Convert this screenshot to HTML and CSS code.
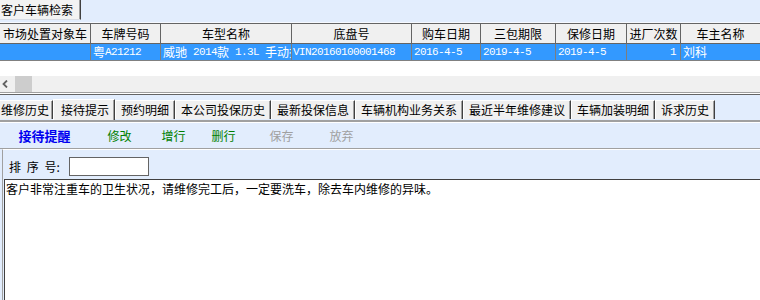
FILE: index.html
```html
<!DOCTYPE html>
<html>
<head>
<meta charset="utf-8">
<link rel="stylesheet" href="styles.css">
</head>
<body>
<div class="page">
  <div class="top-tabs"><div class="top-tab">客户车辆检索</div></div>
  <div class="grid">
    <div class="row head">
      <div class="c w1">市场处置对象车</div>
      <div class="c w2">车牌号码</div>
      <div class="c w3">车型名称</div>
      <div class="c w4">底盘号</div>
      <div class="c w5">购车日期</div>
      <div class="c w6">三包期限</div>
      <div class="c w7">保修日期</div>
      <div class="c w8">进厂次数</div>
      <div class="c w9">车主名称</div>
    </div>
    <div class="row sel">
      <div class="c w1"></div>
      <div class="c w2">粤<span class="m">A21212</span></div>
      <div class="c w3">威驰<span class="m"> 2014</span>款<span class="m"> 1.3L </span>手动挡</div>
      <div class="c w4 m">VIN20160100001468</div>
      <div class="c w5 m">2016-4-5</div>
      <div class="c w6 m">2019-4-5</div>
      <div class="c w7 m">2019-4-5</div>
      <div class="c w8 m num">1</div>
      <div class="c w9">刘科</div>
    </div>
    <div class="grid-empty"></div>
    <div class="hscroll">
      <span class="arrow"><svg width="7" height="8" viewBox="0 0 7 8"><path d="M5 0.5 L1.5 4 L5 7.5" fill="none" stroke="#606060" stroke-width="1.8"/></svg></span>
      <span class="thumb"></span>
    </div>
  </div>
  <div class="sep"></div>
  <div class="tabs">
    <div class="tab first">维修历史</div>
    <div class="tab active">接待提示</div>
    <div class="tab">预约明细</div>
    <div class="tab">本公司投保历史</div>
    <div class="tab">最新投保信息</div>
    <div class="tab">车辆机构业务关系</div>
    <div class="tab">最近半年维修建议</div>
    <div class="tab">车辆加装明细</div>
    <div class="tab">诉求历史</div>
  </div>
  <div class="toolbar">
    <div class="btn b1 primary">接待提醒</div>
    <div class="btn b2 green">修改</div>
    <div class="btn b3 green">增行</div>
    <div class="btn b4 green">删行</div>
    <div class="btn b5 off">保存</div>
    <div class="btn b6 off">放弃</div>
  </div>
  <div class="form">
    <div class="field">
      <span class="label">排 序 号:</span>
      <div class="input"></div>
    </div>
    <div class="memo">客户非常注重车的卫生状况，请维修完工后，一定要洗车，除去车内维修的异味。</div>
  </div>
</div>
</body>
</html>
```
FILE: styles.css
```css
* { box-sizing: border-box; }
html, body { margin: 0; padding: 0; }
body {
  width: 760px;
  height: 300px;
  overflow: hidden;
  background: #e2edfd;
  font-family: "Noto Sans CJK SC", sans-serif;
  font-size: 12px;
  color: #000;
}
.page {
  display: flex;
  flex-direction: column;
  height: 300px;
}
.top-tabs {
  height: 23px;
  display: flex;
  align-items: flex-start;
  border-bottom: 1px solid #f6f9ff;
}
.top-tab {
  height: 20px;
  width: 81px;
  padding-left: 1px;
  line-height: 20px;
  background: #f3f3f3;
  border-right: 1px solid #404040;
  box-shadow: inset -1px 0 0 #a0a0a0;
  border-bottom: 1px solid #d8dce4;
}
.grid {
  background: #fff;
  display: flex;
  flex-direction: column;
}
.row {
  display: flex;
}
.row.head {
  height: 21px;
  background: #f0f0f0;
  border-top: 1px solid #646464;
  border-bottom: 1px solid #646464;
}
.row.sel {
  height: 17px;
  background: #3399ff;
  color: #fff;
  border-bottom: 1px solid #808080;
}
.c {
  white-space: nowrap;
  overflow: hidden;
  display: flex;
  align-items: center;
  border-right: 1px solid #646464;
  line-height: 16px;
}
.head .c { justify-content: center; }
.sel .c { border-right-color: #7d7d7d; padding-left: 2px; }
.sel .c.num { justify-content: flex-end; padding-right: 4px; }
.w1 { width: 91px; }
.w2 { width: 70px; }
.w3 { width: 131px; }
.w4 { width: 120px; }
.w5 { width: 69px; }
.w6 { width: 75px; }
.w7 { width: 71px; }
.w8 { width: 54px; }
.w9 { width: 79px; border-right: none; }
.m {
  font-family: "Liberation Mono", monospace;
  font-size: 11px;
  letter-spacing: -0.6px;
  white-space: pre;
}
.sel .c.w4 { padding-left: 1px; }
.grid-empty { height: 15px; }
.hscroll {
  height: 16px;
  background: #f0f0f0;
  display: flex;
  align-items: stretch;
}
.arrow {
  width: 15px;
  display: flex;
  align-items: center;
  padding-left: 2px;
}
.thumb {
  width: 17px;
  background: #cdcdcd;
}
.sep {
  height: 3px;
  border-top: 1px solid #a0a0a0;
  border-bottom: 1px solid #646464;
  background: #fff;
}
.tabs {
  height: 27px;
  display: flex;
  align-items: flex-end;
  padding-bottom: 1px;
  border-bottom: 2px solid #a0a0a0;
  box-shadow: 0 1px 0 #fff;
}
.tab {
  height: 19px;
  padding: 0 5px 0 5px;
  line-height: 18px;
  background: #f0f0f0;
  border-top: 1px solid #fff;
  border-left: 1px solid #fff;
  border-right: 1px solid #404040;
  box-shadow: inset -1px 0 0 #a0a0a0;
  white-space: nowrap;
}
.tab.first {
  border-left: none;
  padding-left: 1px;
  width: 53px;
}
.tab.active {
  height: 21px;
  width: 62px;
  padding-left: 7px;
  margin-bottom: -1px;
  line-height: 20px;
}
.toolbar {
  height: 27px;
  display: flex;
  align-items: center;
  border-bottom: 1px solid #a0a0a0;
}
.btn {
  text-align: center;
  white-space: nowrap;
}
.b1 { width: 89px; }
.b2 { width: 61px; }
.b3 { width: 47px; }
.b4 { width: 53px; }
.b5 { width: 63px; }
.b6 { width: 57px; }
.primary { color: #0000f0; font-weight: bold; font-size: 13px; }
.green { color: #008000; }
.off { color: #a0a0a0; }
.form {
  flex: 1;
  display: flex;
  flex-direction: column;
  margin-left: 2px;
  border-left: 1px solid #a0a0a0;
  border-top: 1px solid #fff;
  padding-left: 1px;
}
.field {
  height: 29px;
  display: flex;
  align-items: center;
  padding-left: 5px;
  padding-top: 4px;
}
.label {
  word-spacing: 3px;
  width: 60px;
}
.input {
  width: 80px;
  height: 19px;
  background: #fff;
  border: 1px solid #646464;
}
.memo {
  flex: 1;
  background: #fff;
  border-top: 1px solid #404040;
  border-left: 1px solid #404040;
  padding: 2px 0 0 1px;
  line-height: 14px;
  white-space: nowrap;
}
```
